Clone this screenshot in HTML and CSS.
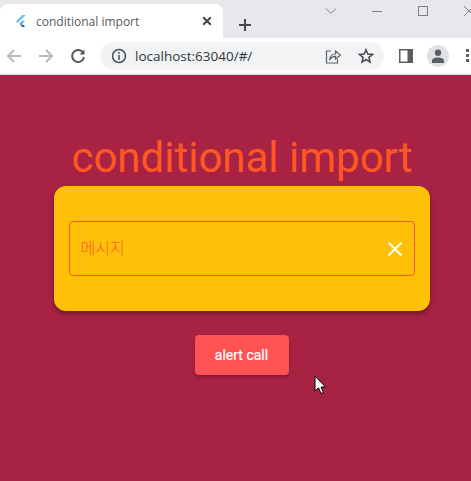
FILE: index.html
```html
<!DOCTYPE html>
<html lang="ko">
<head>
<meta charset="utf-8">
<title>conditional import</title>
<link rel="stylesheet" href="styles.css">
</head>
<body>
<div class="browser">
  <div class="tabstrip">
    <div class="tab">
      <svg class="favicon" width="16" height="16" viewBox="0 0 16 16"><path d="M9.500 2 3 8.300 4.600 10 12.700 2Z" fill="#6cbcec"/><path d="M9.300 7.700 6.300 10.800 9 13.700H12L9 10.800 12.200 7.700Z" fill="#5aa9de"/><path d="M8 12.600 9 13.800H12L10.500 12.300Z" fill="#1f3f5c"/></svg>
      <span class="tab-title">conditional import</span>
      <svg class="tab-close" width="10" height="10" viewBox="0 0 10 10"><path d="M1.200 1.200 8.800 8.800M8.800 1.200 1.200 8.800" stroke="#45494e" stroke-width="2"/></svg>
    </div>
    <svg class="new-tab" width="14" height="14" viewBox="0 0 14 14"><path d="M7 1V13M1 7H13" stroke="#45494e" stroke-width="2"/></svg>
    <div class="win-controls">
      <svg width="12" height="8" viewBox="0 0 12 8"><path d="M1 1.500 6 6.500 11 1.500" stroke="#7b7e82" fill="none"/></svg>
      <svg width="12" height="12" viewBox="0 0 12 12"><path d="M1 6.500H11" stroke="#7b7e82"/></svg>
      <svg width="12" height="12" viewBox="0 0 12 12"><rect x="1.500" y="1.500" width="9" height="9" fill="none" stroke="#7b7e82"/></svg>
      <svg width="12" height="12" viewBox="0 0 12 12"><path d="M1 1 11 11M11 1 1 11" stroke="#7b7e82"/></svg>
    </div>
  </div>
  <div class="toolbar">
    <svg class="nav" width="16" height="16" viewBox="0 0 16 16"><path d="M15 8H2M8 2 2 8l6 6" stroke="#b6b9bd" stroke-width="2" fill="none"/></svg>
    <svg class="nav" width="16" height="16" viewBox="0 0 16 16"><path d="M1 8H14M8 2l6 6-6 6" stroke="#b6b9bd" stroke-width="2" fill="none"/></svg>
    <svg class="nav" width="16" height="16" viewBox="0 0 16 16"><path d="M13.300 5A6 6 0 1 0 14 9" stroke="#53575c" stroke-width="2" fill="none"/><path d="M14.500 1.500V6.500H9.500Z" fill="#53575c"/></svg>
    <div class="omnibox">
      <svg width="16" height="16" viewBox="0 0 16 16"><circle cx="8" cy="8" r="6.500" fill="none" stroke="#4a4e53" stroke-width="1.500"/><path d="M8 7V12M8 4V5.700" stroke="#4a4e53" stroke-width="1.500"/></svg>
      <span class="url">localhost:63040/#/</span>
      <svg class="share" width="16" height="16" viewBox="0 0 16 16"><path d="M6 3H1.500V15H12.500V11" fill="none" stroke="#5b5f64" stroke-width="1.200"/><path d="M4.500 12C5 8 7.500 6 10.500 6V3L15.500 7 10.500 11V8.300C8 8.300 6 9.500 4.500 12Z" fill="none" stroke="#5b5f64" stroke-width="1.200"/></svg>
      <svg class="star" width="16" height="16" viewBox="0 0 16 16"><path d="M8 1.800 9.800 6 14.500 6.400 11 9.400 12 14 8 11.600 4 14 5 9.400 1.500 6.400 6.200 6Z" fill="none" stroke="#4a4e53" stroke-width="1.600"/></svg>
    </div>
    <svg class="panel" width="14" height="14" viewBox="0 0 14 14"><rect width="14" height="14" fill="#5b5f64"/><rect x="1.500" y="1.500" width="7" height="11" fill="#fff"/></svg>
    <div class="avatar">
      <svg width="14" height="14" viewBox="0 0 14 14"><circle cx="7" cy="3.800" r="3.200" fill="#5b5f64"/><path d="M1 14V11.500C1 9.500 4 8.500 7 8.500S13 9.500 13 11.500V14Z" fill="#5b5f64"/></svg>
    </div>
    <div class="menu-dots"><i></i><i></i><i></i></div>
  </div>
  <main class="app">
    <h1 class="title">conditional import</h1>
    <section class="card">
      <div class="field">
        <span class="placeholder">메시지</span>
        <svg width="14" height="14" viewBox="0 0 14 14"><path d="M.7.700 13.300 13.300M13.300.700.700 13.300" stroke="#fff" stroke-width="2"/></svg>
      </div>
    </section>
    <button class="alert-btn" type="button">alert call</button>
  </main>
</div>
<svg class="cursor" width="13" height="20" viewBox="0 0 13 20"><path d="M1 1V16L4.500 12.800 7 18.500 9.500 17.400 7 12H11.500Z" fill="#fff" stroke="#000" stroke-width="1"/></svg>
</body>
</html>
```
FILE: styles.css
```css
* { box-sizing: border-box; }
html, body { margin: 0; height: 100%; overflow: hidden; }
body { font-family: Roboto, "Noto Sans CJK KR", sans-serif; position: relative; }
svg { display: block; flex: none; }
.browser { width: 471px; height: 481px; display: flex; flex-direction: column; }

.tabstrip { height: 38px; background: #e6e8eb; display: flex; align-items: flex-start; padding: 4px 0 0 0; flex: none; position: relative; }
.tab { width: 223px; height: 34px; background: #fff; border-radius: 8px 8px 0 0; display: flex; align-items: center; padding: 0 11px 0 13px; }
.favicon { margin-right: 7px; }
.tab-title { font: 12px "Open Sans", "Liberation Sans", sans-serif; color: #55595e; flex: 1; white-space: nowrap; }
.new-tab { margin: 14px 0 0 15px; }
.win-controls { position: absolute; top: 5px; left: 325px; display: flex; gap: 34px; align-items: center; }

.toolbar { height: 37px; background: #fff; border-bottom: 1px solid #d8dadc; display: flex; align-items: center; padding: 0 0 1px 6px; flex: none; }
.nav { margin-right: 16px; }
.nav:nth-of-type(3) { margin-right: 14px; }
.omnibox { width: 284px; height: 28px; background: #f1f3f4; border-radius: 14px; display: flex; align-items: center; padding: 0 10px 0 11px; }
.url { font: 13.500px "Open Sans", "Liberation Sans", sans-serif; color: #33373b; margin-left: 8px; flex: 1; white-space: nowrap; }
.share { margin: 0 17px 0 0; }
.panel { margin-left: 15px; }
.avatar { width: 22px; height: 22px; border-radius: 50%; background: #dfe1e5; margin-left: 14px; display: flex; align-items: center; justify-content: center; }
.menu-dots { margin-left: 17px; display: flex; flex-direction: column; gap: 2px; }
.menu-dots i { width: 3px; height: 3px; background: #5b5f64; display: block; }

.app { flex: 1; background: #a82343; display: flex; flex-direction: column; align-items: center; padding: 58px 0 0 12px; }
.title { margin: 0; font-weight: 400; font-size: 42px; line-height: 49px; color: #ff5722; padding-left: 1px; white-space: nowrap; }
.card { width: 376px; height: 125px; margin-top: 4px; background: #ffc107; border-radius: 12px; padding: 35px 15px 0; box-shadow: 0 3px 5px rgba(0,0,0,.35); }
.field { height: 55px; border: 1px solid #ff5722; border-radius: 4px; display: flex; align-items: center; justify-content: space-between; padding: 0 12px 3px 11px; }
.field svg { margin-top: 3px; }
.placeholder { font: 300 16px "Noto Sans CJK KR", sans-serif; color: #ff5722; }
.alert-btn { margin-top: 24px; width: 94px; height: 40px; border: 0; border-radius: 4px; background: #ff5252; color: #fff; font: 14px Roboto, sans-serif; -webkit-text-stroke: .2px #fff; box-shadow: 0 2px 3px rgba(0,0,0,.25); padding: 0; }
.cursor { position: absolute; left: 314px; top: 375px; }
```
